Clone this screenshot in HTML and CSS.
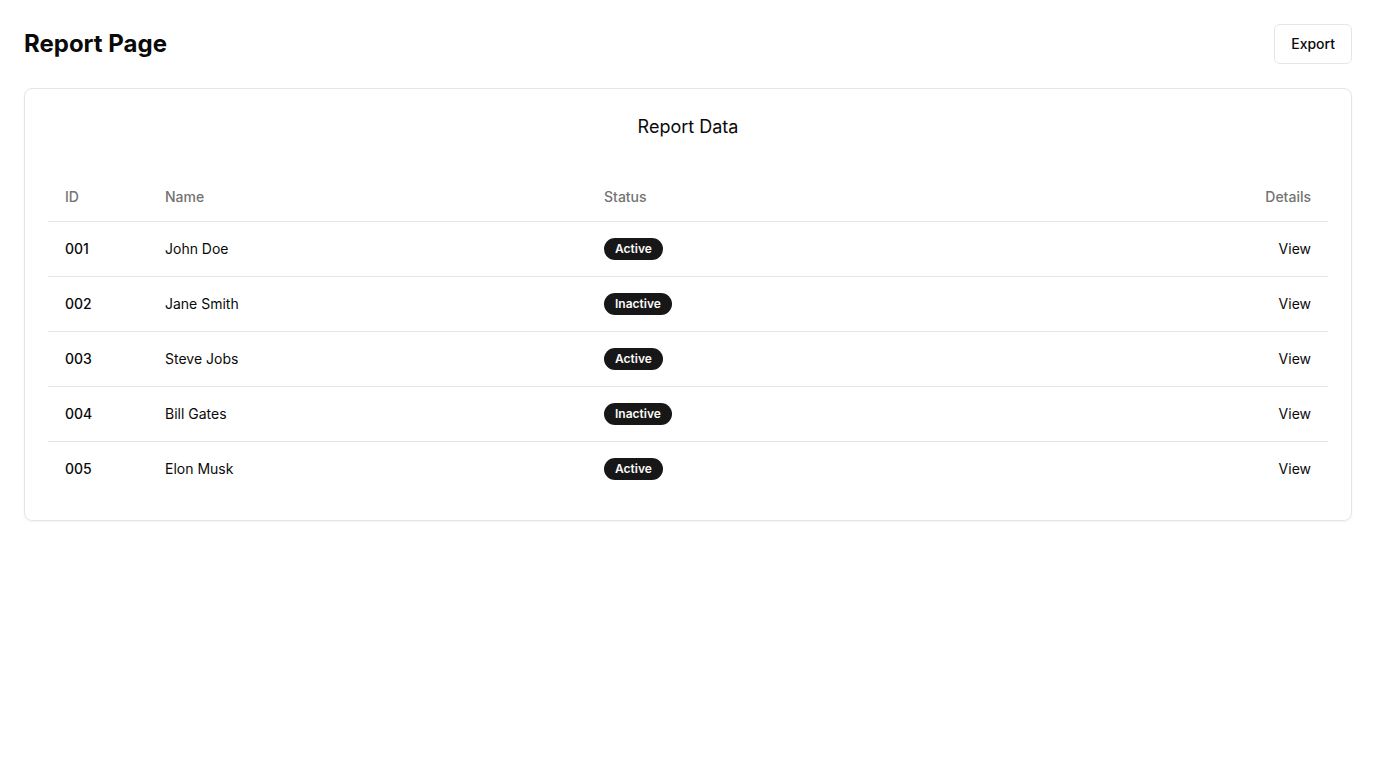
FILE: index.html
```html
<!DOCTYPE html>
<html lang="en">
<head>
<meta charset="utf-8">
<title>Report Page</title>
<link rel="stylesheet" href="styles.css">
</head>
<body>
<div class="page">
  <header class="top">
    <h1 class="title">Report Page</h1>
    <button class="btn">Export</button>
  </header>
  <section class="card">
    <h2 class="card-title">Report Data</h2>
    <table class="table">
      <thead>
        <tr>
          <th class="c-id">ID</th>
          <th class="c-name">Name</th>
          <th class="c-status">Status</th>
          <th class="c-details">Details</th>
        </tr>
      </thead>
      <tbody>
        <tr><td class="c-id id">001</td><td>John Doe</td><td><span class="badge">Active</span></td><td class="c-details">View</td></tr>
        <tr><td class="c-id id">002</td><td>Jane Smith</td><td><span class="badge">Inactive</span></td><td class="c-details">View</td></tr>
        <tr><td class="c-id id">003</td><td>Steve Jobs</td><td><span class="badge">Active</span></td><td class="c-details">View</td></tr>
        <tr><td class="c-id id">004</td><td>Bill Gates</td><td><span class="badge">Inactive</span></td><td class="c-details">View</td></tr>
        <tr><td class="c-id id">005</td><td>Elon Musk</td><td><span class="badge">Active</span></td><td class="c-details">View</td></tr>
      </tbody>
    </table>
  </section>
</div>
</body>
</html>
```
FILE: styles.css
```css
* { box-sizing: border-box; }
html, body { margin: 0; padding: 0; background: #fff; }
body {
  font-family: Inter, "Noto Sans", sans-serif;
  color: #0a0a0a;
  font-size: 14px;
}
.page { padding: 24px; }
.top {
  display: flex;
  align-items: center;
  justify-content: space-between;
  height: 40px;
  margin-bottom: 24px;
}
.title {
  margin: 0;
  font-size: 24px;
  line-height: 32px;
  font-weight: 700;
}
.btn {
  height: 40px;
  padding: 0 16px 1px;
  font-family: inherit;
  font-size: 14px;
  font-weight: 500;
  color: #0a0a0a;
  background: #fff;
  border: 1px solid #e5e5e5;
  border-radius: 6px;
}
.card {
  border: 1px solid #e5e5e5;
  border-radius: 8px;
  padding: 24px 23px 24px;
  box-shadow: 0 1px 2px rgba(0,0,0,0.05);
}
.card-title {
  margin: 0 0 32px;
  text-align: center;
  font-size: 18px;
  line-height: 28px;
  font-weight: 400;
}
.table {
  width: 100%;
  border-collapse: collapse;
  font-size: 14px;
}
.table th {
  height: 48px;
  padding: 0 16px 0 17px;
  text-align: left;
  font-weight: 500;
  color: #737373;
  vertical-align: middle;
}
.table thead tr { border-bottom: 1px solid #e5e5e5; }
.table tbody tr { border-bottom: 1px solid #e5e5e5; }
.table tbody tr:last-child { border-bottom: none; }
.table td {
  padding: 16px 16px 16px 17px;
  line-height: 20px;
  vertical-align: middle;
  height: 54px;
}
.table .c-name, .table td:nth-child(2) { padding-left: 16px; }
.table .c-status, .table td:nth-child(3) { padding-left: 16px; }
.c-id { width: 101px; }
.c-name { width: 439px; }
.table .c-details { text-align: right; padding-right: 17px; }
.id { font-weight: 500; }
.badge {
  display: inline-flex;
  align-items: center;
  height: 22px;
  padding: 0 10px;
  border: 1px solid transparent;
  border-radius: 999px;
  background: #171717;
  color: #fafafa;
  font-size: 12px;
  font-weight: 600;
  line-height: 16px;
}
```
